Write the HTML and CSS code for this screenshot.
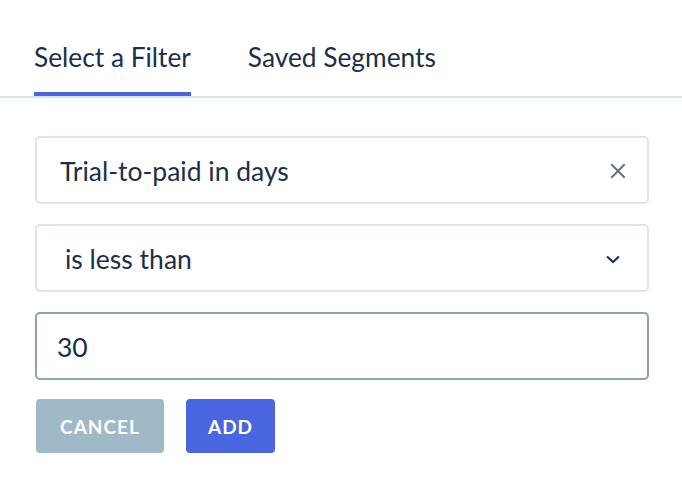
FILE: index.html
```html
<!DOCTYPE html>
<html>
<head>
<meta charset="utf-8">
<link rel="stylesheet" href="styles.css">
</head>
<body>
<div class="tabs">
  <div class="tab active">Select a Filter</div>
  <div class="tab">Saved Segments</div>
</div>
<div class="form">
  <div class="field">
    <span class="value">Trial-to-paid in days</span>
    <svg class="icon-x" width="16" height="16" viewBox="0 0 16 16"><path d="M2 2L14 14M14 2L2 14" stroke="#5f7584" stroke-width="2" fill="none" stroke-linecap="square"/></svg>
  </div>
  <div class="field select">
    <span class="value">is less than</span>
    <svg class="icon-chev" width="16" height="10" viewBox="0 0 16 10"><path d="M2 2.5L8 8L14 2.5" stroke="#1d3450" stroke-width="2.2" fill="none"/></svg>
  </div>
  <div class="field input">
    <span class="value">30</span>
  </div>
  <div class="buttons">
    <button class="btn cancel">CANCEL</button>
    <button class="btn add">ADD</button>
  </div>
</div>
</body>
</html>
```
FILE: styles.css
```css
html, body {
  margin: 0;
  padding: 0;
  background: #ffffff;
}
body {
  font-family: "Lato", "Liberation Sans", sans-serif;
  color: #1c2f4a;
}
.tabs {
  display: flex;
  gap: 57px;
  padding-left: 34px;
  height: 96px;
  border-bottom: 2px solid #dbe3ec;
}
.tab {
  font-size: 26.3px;
  line-height: 32px;
  padding-top: 41px;
  box-sizing: border-box;
  height: 96px;
  color: #1c2f4a;
}
.tab.active {
  border-bottom: 4px solid #4a65e0;
}
.form {
  padding: 38px 33px 0 35px;
  display: flex;
  flex-direction: column;
  gap: 20px;
}
.field {
  height: 68px;
  box-sizing: border-box;
  border: 2px solid #dfe5ee;
  border-radius: 5px;
  display: flex;
  align-items: center;
  justify-content: space-between;
  padding: 2px 21px 0 23px;
  font-size: 26.5px;
}
.field.select {
  padding-left: 28px;
  padding-right: 26px;
}
.field.input {
  border-color: #8fa2b0;
  padding-left: 20px;
}
.buttons {
  display: flex;
  gap: 22px;
  margin-top: -1px;
  padding-left: 1px;
}
.btn {
  height: 54px;
  border: none;
  border-radius: 4px;
  color: #ffffff;
  font-family: "Lato", "Liberation Sans", sans-serif;
  font-weight: 700;
  font-size: 19px;
  letter-spacing: 1px;
  padding: 0;
}
.btn.cancel {
  width: 128px;
  background: #9fb9c7;
}
.btn.add {
  width: 89px;
  background: #4a65e0;
}
```
